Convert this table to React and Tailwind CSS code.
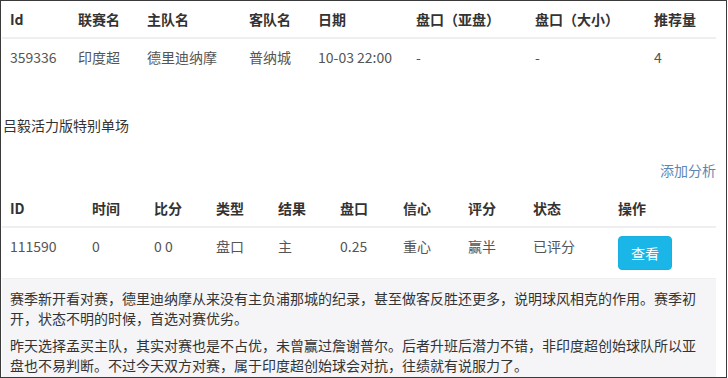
import React from 'react';

const font = { fontFamily: '"Noto Sans CJK SC", "Noto Sans", sans-serif' };

const matchCols = 'grid grid-cols-[68px_69px_102px_69px_98px_119px_119px_70px]';
const matchHead = ['Id', '联赛名', '主队名', '客队名', '日期', '盘口（亚盘）', '盘口（大小）', '推荐量'];
const matchRow = ['359336', '印度超', '德里迪纳摩', '普纳城', '10-03 22:00', '-', '-', '4'];

const tipCols = 'grid grid-cols-[82px_62px_62px_62px_62px_63px_65px_65px_85px_106px]';
const tipHead = ['ID', '时间', '比分', '类型', '结果', '盘口', '信心', '评分', '状态', '操作'];
const tipRow = ['111590', '0', '0 0', '盘口', '主', '0.25', '重心', '赢半', '已评分'];

export default function App() {
  return (
    <div
      className="w-[727px] h-[378px] border border-[#3a3a3a] bg-white overflow-hidden text-[14px] leading-5 text-[#333]"
      style={font}
    >
      <div className="pl-px pr-[10px]">
        {/* match table */}
        <div className="w-[714px]">
          <div className={`${matchCols} border-b-2 border-[#efefef] font-bold`}>
            {matchHead.map((h) => (
              <div key={h} className="px-2 py-2 whitespace-nowrap">{h}</div>
            ))}
          </div>
          <div className={`${matchCols} text-[#555]`}>
            {matchRow.map((c, i) => (
              <div key={i} className="px-2 py-2 whitespace-nowrap">{c}</div>
            ))}
          </div>
        </div>

        <div className="mt-10 pl-px">吕毅活力版特别单场</div>

        <div className="mt-[25px] text-right text-[#5b87b5]">添加分析</div>

        {/* tips table */}
        <div className="mt-[10px] w-[714px]">
          <div className={`${tipCols} border-b-2 border-[#efefef] font-bold`}>
            {tipHead.map((h) => (
              <div key={h} className="px-2 py-2 whitespace-nowrap">{h}</div>
            ))}
          </div>
          <div className={`${tipCols} border-b border-[#efefef] text-[#555]`}>
            {tipRow.map((c, i) => (
              <div key={i} className="px-2 py-2 whitespace-nowrap">{c}</div>
            ))}
            <div className="px-2 py-2">
              <button className="h-[34px] px-3 rounded-[4px] bg-[#1bb6e8] text-white border border-[#18b0e0]">
                查看
              </button>
            </div>
          </div>

          <div className="bg-[#f5f5f7] px-2 pt-[9px] h-[98px] text-[#333]">
            <p className="mb-[7px]">
              赛季新开看对赛，德里迪纳摩从来没有主负浦那城的纪录，甚至做客反胜还更多，说明球风相克的作用。赛季初开，状态不明的时候，首选对赛优劣。
            </p>
            <p>
              昨天选择孟买主队，其实对赛也是不占优，未曾赢过詹谢普尔。后者升班后潜力不错，非印度超创始球队所以亚盘也不易判断。不过今天双方对赛，属于印度超创始球会对抗，往绩就有说服力了。
            </p>
          </div>
        </div>
      </div>
    </div>
  );
}
